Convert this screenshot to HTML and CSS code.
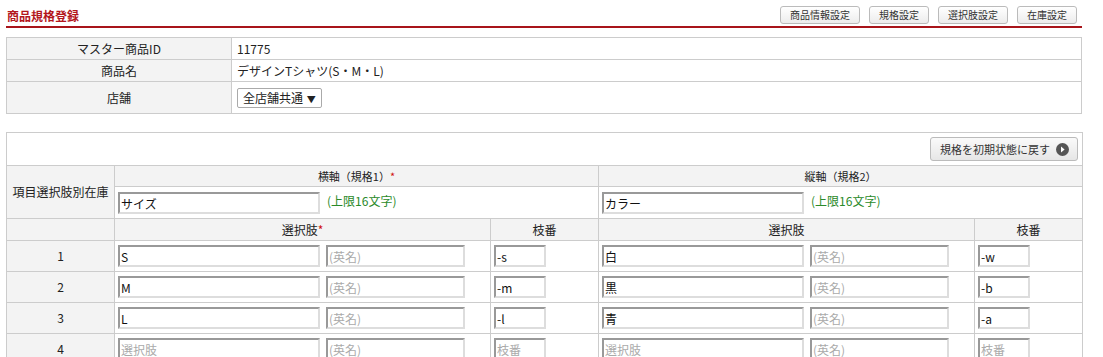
FILE: index.html
```html
<!DOCTYPE html>
<html lang="ja">
<head>
    <meta charset="UTF-8">
    <title>商品規格登録</title>
    <link rel="stylesheet" href="styles.css">
</head>
<body>
    <div class="page">
        <div class="page-head">
            <h1 class="page-title">商品規格登録</h1>
            <div class="tab-buttons">
                <button class="btn-tab">商品情報設定</button>
                <button class="btn-tab">規格設定</button>
                <button class="btn-tab">選択肢設定</button>
                <button class="btn-tab">在庫設定</button>
            </div>
        </div>

        <table class="info-table">
            <tr>
                <th>マスター商品ID</th>
                <td>11775</td>
            </tr>
            <tr>
                <th>商品名</th>
                <td>デザインTシャツ(S・M・L)</td>
            </tr>
            <tr class="row-shop">
                <th>店舗</th>
                <td><span class="select-box">全店舗共通 <span class="arrow">▼</span></span></td>
            </tr>
        </table>

        <table class="spec-table">
            <colgroup>
                <col class="col-label">
                <col class="col-name">
                <col class="col-branch">
                <col class="col-name">
                <col class="col-branch">
            </colgroup>
            <tr class="row-tools">
                <td colspan="5">
                    <button class="btn-reset">規格を初期状態に戻す
                        <svg width="13" height="13" viewBox="0 0 13 13"><circle cx="6.5" cy="6.5" r="6.5" fill="#555"/><path d="M5 3.6 L8.6 6.5 L5 9.4 Z" fill="#fff"/></svg>
                    </button>
                </td>
            </tr>
            <tr class="row-axis">
                <th rowspan="2" class="label">項目選択肢別在庫</th>
                <th colspan="2">横軸（規格1）<span class="req">*</span></th>
                <th colspan="2">縦軸（規格2）</th>
            </tr>
            <tr class="row-axis-input">
                <td colspan="2"><input class="in-name" type="text" value="サイズ"><span class="limit">(上限16文字)</span></td>
                <td colspan="2"><input class="in-name" type="text" value="カラー"><span class="limit">(上限16文字)</span></td>
            </tr>
            <tr class="row-head">
                <th class="label"></th>
                <th>選択肢<span class="req">*</span></th>
                <th>枝番</th>
                <th>選択肢</th>
                <th>枝番</th>
            </tr>
            <tr class="row-item">
                <th class="label">1</th>
                <td><input class="in-name" type="text" value="S"><input class="in-en" type="text" placeholder="(英名)"></td>
                <td><input class="in-branch" type="text" value="-s"></td>
                <td><input class="in-name" type="text" value="白"><input class="in-en" type="text" placeholder="(英名)"></td>
                <td><input class="in-branch" type="text" value="-w"></td>
            </tr>
            <tr class="row-item">
                <th class="label">2</th>
                <td><input class="in-name" type="text" value="M"><input class="in-en" type="text" placeholder="(英名)"></td>
                <td><input class="in-branch" type="text" value="-m"></td>
                <td><input class="in-name" type="text" value="黒"><input class="in-en" type="text" placeholder="(英名)"></td>
                <td><input class="in-branch" type="text" value="-b"></td>
            </tr>
            <tr class="row-item">
                <th class="label">3</th>
                <td><input class="in-name" type="text" value="L"><input class="in-en" type="text" placeholder="(英名)"></td>
                <td><input class="in-branch" type="text" value="-l"></td>
                <td><input class="in-name" type="text" value="青"><input class="in-en" type="text" placeholder="(英名)"></td>
                <td><input class="in-branch" type="text" value="-a"></td>
            </tr>
            <tr class="row-item">
                <th class="label">4</th>
                <td><input class="in-name" type="text" placeholder="選択肢"><input class="in-en" type="text" placeholder="(英名)"></td>
                <td><input class="in-branch" type="text" placeholder="枝番"></td>
                <td><input class="in-name" type="text" placeholder="選択肢"><input class="in-en" type="text" placeholder="(英名)"></td>
                <td><input class="in-branch" type="text" placeholder="枝番"></td>
            </tr>
        </table>
    </div>
</body>
</html>
```

FILE: styles.css
```css
body {
    margin: 0;
    background: #fff;
    color: #222;
    font-family: "Noto Sans CJK JP", "Noto Sans", sans-serif;
    font-size: 12px;
    overflow: hidden;
}
.page {
    width: 1076px;
    padding: 6px 0 0 6px;
}
.page-head {
    display: flex;
    justify-content: space-between;
    align-items: flex-start;
    height: 20px;
    border-bottom: 2px solid #a8141a;
    padding-right: 5px;
}
.page-title {
    margin: 0;
    padding: 2px 0 0 1px;
    font-size: 12px;
    line-height: 16px;
    font-weight: bold;
    color: #b3161c;
}
.tab-buttons {
    display: flex;
    gap: 9px;
}
.btn-tab {
    height: 18px;
    padding: 0 9px;
    font-family: inherit;
    font-size: 10px;
    line-height: 16px;
    color: #333;
    background: linear-gradient(#fff, #ececec);
    border: 1px solid #bbb;
    border-radius: 3px;
}

.info-table {
    margin-top: 9px;
    width: 1076px;
    border-collapse: collapse;
    table-layout: fixed;
}
.info-table th,
.info-table td {
    border: 1px solid #ccc;
    height: 21px;
    padding: 0 5px;
    font-weight: normal;
    line-height: 16px;
}
.info-table th {
    width: 214px;
    background: #f3f3f3;
    text-align: center;
}
.info-table .row-shop th,
.info-table .row-shop td {
    height: 31px;
}
.select-box {
    display: inline-block;
    height: 18px;
    padding: 0 5px 0 5px;
    border: 1px solid #aaa;
    border-radius: 2px;
    line-height: 18px;
    background: #fff;
}
.select-box .arrow {
    font-size: 9px;
    margin-left: 1px;
}

.spec-table {
    margin-top: 18px;
    width: 1076px;
    border-collapse: collapse;
    table-layout: fixed;
}
.col-label,
.col-branch {
    width: 108px;
}
.col-name {
    width: 376px;
}
.spec-table th,
.spec-table td {
    border: 1px solid #ccc;
    padding: 0 3px;
    font-weight: normal;
    line-height: 16px;
}
.spec-table th {
    background: #f3f3f3;
    text-align: center;
}
.row-tools td {
    height: 32px;
    text-align: right;
    padding-right: 4px;
}
.btn-reset {
    display: inline-flex;
    align-items: center;
    gap: 6px;
    height: 24px;
    padding: 0 8px 0 9px;
    font-family: inherit;
    font-size: 11px;
    color: #333;
    background: linear-gradient(#fafafa, #e6e6e6);
    border: 1px solid #bbb;
    border-radius: 3px;
}
.row-axis th {
    height: 18px;
    font-size: 11px;
    vertical-align: top;
    padding-top: 2px;
}
.spec-table .row-axis th.label {
    vertical-align: middle;
    padding-top: 0;
    font-size: 12px;
}
.row-axis-input td {
    height: 31px;
}
.row-head th {
    height: 21px;
}
.row-item th,
.row-item td {
    height: 30px;
}
.row-item th {
    background: #f3f3f3;
}
.req {
    color: #d01010;
}
.limit {
    color: #2a8a2a;
    margin-left: 7px;
}
input {
    box-sizing: border-box;
    height: 22px;
    padding: 1px 1px 0;
    font-family: inherit;
    font-size: 12px;
    color: #111;
    border: 2px solid #ddd;
    border-top-color: #999;
    border-left-color: #999;
    vertical-align: middle;
    background: #fff;
}
input::placeholder {
    color: #aaa;
}
.in-name {
    width: 202px;
}
.in-en {
    width: 139px;
    margin-left: 6px;
}
.in-branch {
    width: 52px;
}
```
